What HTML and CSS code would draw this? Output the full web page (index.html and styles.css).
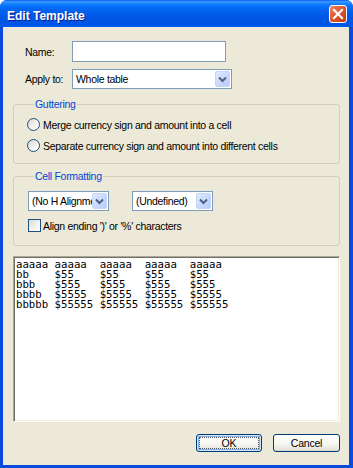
FILE: index.html
```html
<!DOCTYPE html>
<html lang="en">
<head>
    <meta charset="UTF-8">
    <title>Edit Template</title>
    <link rel="stylesheet" href="styles.css">
</head>
<body>
    <div class="window">
        <div class="titlebar">
            <span class="title">Edit Template</span>
            <span class="close">
                <svg width="18" height="18" viewBox="0 0 18 18">
                    <path d="M5 5 L13 13 M13 5 L5 13" stroke="#fff" stroke-width="2.2" stroke-linecap="square"/>
                </svg>
            </span>
        </div>

        <div class="client">
            <div class="form-row">
                <label>Name:</label>
                <div class="textbox"></div>
            </div>
            <div class="form-row apply-row">
                <label>Apply to:</label>
                <div class="combo wide">
                    <span class="combo-text">Whole table</span>
                    <span class="combo-btn">
                        <svg width="15" height="16" viewBox="0 0 15 16"><path d="M4 6.5 L7.5 10 L11 6.5" fill="none" stroke="#4D6185" stroke-width="2"/></svg>
                    </span>
                </div>
            </div>

            <fieldset class="group guttering">
                <legend>Guttering</legend>
                <div class="option"><span class="radio"></span>Merge currency sign and amount into a cell</div>
                <div class="option"><span class="radio"></span>Separate currency sign and amount into different cells</div>
            </fieldset>

            <fieldset class="group formatting">
                <legend>Cell Formatting</legend>
                <div class="combo-row">
                    <div class="combo small">
                        <span class="combo-text">(No H Alignment)</span>
                        <span class="combo-btn">
                            <svg width="15" height="16" viewBox="0 0 15 16"><path d="M4 6.5 L7.5 10 L11 6.5" fill="none" stroke="#4D6185" stroke-width="2"/></svg>
                        </span>
                    </div>
                    <div class="combo small">
                        <span class="combo-text">(Undefined)</span>
                        <span class="combo-btn">
                            <svg width="15" height="16" viewBox="0 0 15 16"><path d="M4 6.5 L7.5 10 L11 6.5" fill="none" stroke="#4D6185" stroke-width="2"/></svg>
                        </span>
                    </div>
                </div>
                <div class="option check-row"><span class="check"></span>Align ending ')' or '%' characters</div>
            </fieldset>

            <div class="preview"><pre>aaaaa aaaaa  aaaaa  aaaaa  aaaaa
bb    $55    $55    $55    $55
bbb   $555   $555   $555   $555
bbbb  $5555  $5555  $5555  $5555
bbbbb $55555 $55555 $55555 $55555</pre></div>

            <div class="buttons">
                <button class="btn default"><span class="focus">OK</span></button>
                <button class="btn cancel">Cancel</button>
            </div>
        </div>
    </div>
</body>
</html>
```

FILE: styles.css
```css
body {
    margin: 0;
    background: #fff;
}
.window {
    width: 353px;
    height: 468px;
    background: #0A4BDF;
    border-radius: 7px 7px 0 0;
    display: flex;
    flex-direction: column;
    font-family: "Liberation Sans", Arial, sans-serif;
    font-size: 10.5px;
    letter-spacing: -0.3px;
    color: #000;
}
.titlebar {
    height: 27px;
    flex: none;
    display: flex;
    align-items: flex-start;
    justify-content: space-between;
    padding: 0 6px 0 7px;
    border-radius: 7px 7px 0 0;
    background: linear-gradient(to bottom, #0058EE 0%, #3A93FF 5%, #288EFF 10%, #127DFF 16%, #036FFC 24%, #0262EE 40%, #0057E5 62%, #0054E3 82%, #0055EB 92%, #005BF5 100%);
}
.title {
    margin-top: 8px;
    line-height: 16px;
    font-size: 12px;
    font-weight: bold;
    letter-spacing: 0;
    color: #fff;
    text-shadow: 1px 1px 0 #0A1E8C;
}
.close {
    margin-top: 5px;
    width: 18px;
    height: 18px;
    box-sizing: border-box;
    border: 1px solid #fff;
    border-radius: 3px;
    background: linear-gradient(135deg, #F08A6A 0%, #E2603C 35%, #D1451F 75%, #C23A17 100%);
    display: flex;
}
.close svg {
    margin: -1px;
}
.client {
    flex: 1;
    margin: 0 4px 3px 3px;
    padding: 14px 9px 0 10px;
    background: #ECE9D8;
    display: flex;
    flex-direction: column;
}
.form-row {
    display: flex;
    align-items: center;
    padding-left: 12px;
}
.form-row label {
    width: 47px;
}
.apply-row {
    margin-top: 7px;
}
.textbox {
    width: 154px;
    height: 21px;
    box-sizing: border-box;
    border: 1px solid #7F9DB9;
    background: #fff;
}
.combo {
    height: 20px;
    box-sizing: border-box;
    border: 1px solid #7F9DB9;
    background: #fff;
    display: flex;
    align-items: center;
    padding: 1px;
}
.combo.wide {
    width: 160px;
}
.combo.small {
    width: 81px;
}
.combo-text {
    flex: 1;
    min-width: 0;
    overflow: hidden;
    white-space: nowrap;
    padding-left: 2px;
}
.combo-btn {
    width: 15px;
    height: 16px;
    flex: none;
    box-sizing: border-box;
    border: 1px solid #C4D5FA;
    border-radius: 2px;
    background: linear-gradient(135deg, #E2EBFE 0%, #CBDAFC 50%, #B8CCF9 100%);
    display: flex;
}
.combo-btn svg {
    margin: -1px;
}
.group {
    margin: 9px 0 0;
    padding: 4px 13px 7px;
    border: 1px solid #D0D0BF;
    border-radius: 3px;
    min-width: 0;
}
.group legend {
    margin-left: 7px;
    padding: 0 1px;
    line-height: 12px;
    color: #0046D5;
}
.formatting {
    margin-top: 6px;
    padding-top: 9px;
    padding-bottom: 9px;
}
.option {
    display: flex;
    align-items: center;
    height: 21px;
    white-space: nowrap;
}
.radio {
    width: 13px;
    height: 13px;
    box-sizing: border-box;
    border: 1px solid #1C5180;
    border-radius: 50%;
    background: linear-gradient(135deg, #DCD8CC 0%, #F3F2EE 55%, #fff 100%);
    margin-right: 3px;
}
.combo-row {
    display: flex;
    gap: 23px;
    padding-left: 1px;
}
.check-row {
    margin-top: 4px;
    padding-left: 1px;
}
.check {
    width: 13px;
    height: 13px;
    box-sizing: border-box;
    border: 1px solid #1C5180;
    background: linear-gradient(135deg, #DCD8CC 0%, #F3F2EE 55%, #fff 100%);
    margin-right: 2px;
}
.preview {
    margin-top: 10px;
    height: 166px;
    box-sizing: border-box;
    background: #fff;
    border-top: 1px solid #ACA899;
    border-left: 1px solid #ACA899;
    border-bottom: 1px solid #fff;
    border-right: 1px solid #fff;
    box-shadow: inset 1px 1px 0 #716F64, inset -1px -1px 0 #F1EFE2;
    padding: 3px 2px;
}
.preview pre {
    margin: 0;
    font-family: "DejaVu Sans Mono", "Liberation Mono", monospace;
    font-size: 10.7px;
    letter-spacing: 0;
    line-height: 10px;
}
.buttons {
    margin-top: 12px;
    display: flex;
    justify-content: flex-end;
    gap: 11px;
}
.btn {
    height: 18px;
    padding: 0;
    box-sizing: border-box;
    border: 1px solid #003C74;
    border-radius: 3px;
    background: linear-gradient(to bottom, #FFFFFF 0%, #F4F4F0 60%, #E6E4DA 90%, #D6D0C5 100%);
    font-family: "Liberation Sans", Arial, sans-serif;
    font-size: 10.5px;
    letter-spacing: -0.2px;
    color: #000;
    display: flex;
    align-items: center;
    justify-content: center;
}
.btn.default {
    width: 66px;
    box-shadow: inset 0 0 0 1px #CEE7FF, inset 0 0 0 2px #89ADE4;
}
.btn.cancel {
    width: 67px;
}
.focus {
    flex: 1;
    align-self: stretch;
    margin: 2px;
    border: 1px dotted #555;
    display: flex;
    align-items: center;
    justify-content: center;
}
```
